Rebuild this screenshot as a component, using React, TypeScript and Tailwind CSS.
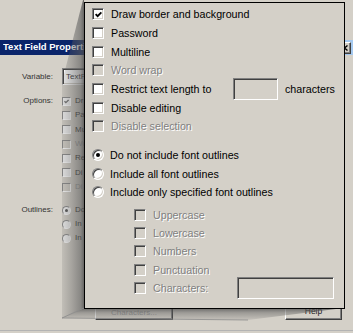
import React from "react";

const sunken =
  "border border-t-[#808080] border-l-[#808080] border-r-white border-b-white shadow-[inset_1px_1px_0_#404040,inset_-1px_-1px_0_#d4d0c8]";
const raised =
  "border border-t-white border-l-white border-r-[#404040] border-b-[#404040] shadow-[inset_-1px_-1px_0_#808080]";
const grayText = "text-[#808080] [text-shadow:1px_1px_0_#ffffff]";

function Tick({ size, color = "black" }: { size: number; color?: string }) {
  return (
    <svg width={size} height={size} viewBox="0 0 7 7">
      <polyline points="0.6,3.1 2.6,5.1 6.4,1.3" fill="none" stroke={color} strokeWidth="1.9" />
    </svg>
  );
}

function Box({ checked = false, disabled = false }: { checked?: boolean; disabled?: boolean }) {
  return (
    <span
      className={`flex items-center justify-center w-[12px] h-[12px] shrink-0 ${sunken} ${
        disabled ? "bg-[#d4d0c8]" : "bg-white"
      }`}
    >
      {checked && <Tick size={7} />}
    </span>
  );
}

function Radio({ checked = false }: { checked?: boolean }) {
  return (
    <span className="flex items-center justify-center w-[12px] h-[12px] shrink-0 rounded-full bg-white border border-t-[#808080] border-l-[#808080] border-r-white border-b-white shadow-[inset_1px_1px_0_#404040,inset_-1px_-1px_0_#d4d0c8]">
      {checked && <span className="w-[4px] h-[4px] rounded-full bg-black" />}
    </span>
  );
}

function SmallBox({ checked = false, disabled = false }: { checked?: boolean; disabled?: boolean }) {
  return (
    <span
      className={`flex items-center justify-center w-[9px] h-[9px] shrink-0 border border-t-[#8a8a8a] border-l-[#8a8a8a] border-r-white border-b-white ${
        disabled ? "bg-[#d4d0c8]" : "bg-[#f2f2f2]"
      }`}
    >
      {checked && <Tick size={5} color="#707070" />}
    </span>
  );
}

function SmallRadio({ checked = false }: { checked?: boolean }) {
  return (
    <span className="flex items-center justify-center w-[9px] h-[9px] shrink-0 rounded-full bg-[#f2f2f2] border border-t-[#8a8a8a] border-l-[#8a8a8a] border-r-white border-b-white">
      {checked && <span className="w-[3px] h-[3px] rounded-full bg-[#555]" />}
    </span>
  );
}

// only the slice left of the callout is visible in the dialog behind
const bgOptions = [
  { label: "Dr", checked: true },
  { label: "Pa" },
  { label: "Mu" },
  { label: "Wo", disabled: true },
  { label: "Re" },
  { label: "Di" },
  { label: "Di", disabled: true },
];

const bgOutlines = ["Do", "In", "In"];

const subOptions = ["Uppercase", "Lowercase", "Numbers", "Punctuation"];

export default function App() {
  return (
    <div className="relative w-[353px] h-[333px] overflow-hidden bg-[#d4d0c8] font-['Liberation_Sans',Arial,sans-serif]">
      {/* dialog behind the callout */}
      <div className="flex flex-col h-full pt-[40px] text-[8px] text-[#333]">
        <div className="h-[15px] flex items-center justify-between pl-[3px] pr-[2px] bg-linear-to-r from-[#0a246a] from-30% to-[#a6caf0]">
          <span className="text-white font-bold text-[9.5px] w-[82px] overflow-hidden whitespace-nowrap">
            Text Field Properties
          </span>
          <span className={`w-[14px] h-[12px] flex items-center justify-center bg-[#d4d0c8] ${raised}`}>
            <svg width="7" height="6" viewBox="0 0 7 6">
              <path d="M0.5 0.5 L6.5 5.5 M6.5 0.5 L0.5 5.5" stroke="black" strokeWidth="1.4" />
            </svg>
          </span>
        </div>

        <div className="w-[84px] overflow-hidden flex flex-col">
          <div className="mt-[13px] flex items-center h-[17px]">
            <span className="w-[53px] shrink-0 text-right">Variable:</span>
            <span className={`ml-[9px] w-[60px] shrink-0 h-[17px] flex items-center pl-[3px] bg-white ${sunken}`}>
              TextF
            </span>
          </div>

          <div className="mt-[9px] flex">
            <span className="w-[53px] shrink-0 h-[14.33px] flex items-center justify-end">Options:</span>
            <div className="ml-[9px] flex flex-col">
              {bgOptions.map((o, i) => (
                <div key={i} className="h-[14.33px] flex items-center gap-[4px]">
                  <SmallBox checked={o.checked} disabled={o.disabled} />
                  <span className={o.disabled ? "text-[#9a9a9a]" : ""}>{o.label}</span>
                </div>
              ))}
            </div>
          </div>

          <div className="mt-[9px] flex">
            <span className="w-[53px] shrink-0 h-[14px] flex items-center justify-end">Outlines:</span>
            <div className="ml-[9px] flex flex-col">
              {bgOutlines.map((o, i) => (
                <div key={i} className="h-[14px] flex items-center gap-[4px]">
                  <SmallRadio checked={i === 0} />
                  <span>{o}</span>
                </div>
              ))}
            </div>
          </div>
        </div>

        <div className="mt-auto flex h-[14px]">
          <span className={`ml-[95px] w-[78px] flex items-center justify-center text-[#999] ${raised}`}>
            Characters...
          </span>
          <span className={`ml-[112px] w-[57px] flex items-end pb-[1px] justify-center text-[8.5px] text-[#222] ${raised}`}>
            Help
          </span>
        </div>
        <div className="mt-[10px] h-px bg-[#b4b4b4]" />
        <div className="h-[2px]" />
      </div>

      {/* 3D zoom callout faces */}
      <svg className="absolute inset-0 pointer-events-none" width="353" height="333" viewBox="0 0 353 333">
        <defs>
          <linearGradient id="side" gradientUnits="userSpaceOnUse" x1="62" y1="0" x2="84" y2="0">
            <stop offset="0" stopColor="#5a5a5a" stopOpacity="0.15" />
            <stop offset="0.45" stopColor="#5a5a5a" stopOpacity="0.38" />
            <stop offset="0.85" stopColor="#5a5a5a" stopOpacity="0.62" />
            <stop offset="1" stopColor="#4a4a4a" stopOpacity="0.8" />
          </linearGradient>
          <linearGradient id="floor" gradientUnits="userSpaceOnUse" x1="0" y1="308" x2="0" y2="320">
            <stop offset="0" stopColor="#4a4a4a" stopOpacity="0.8" />
            <stop offset="0.4" stopColor="#5a5a5a" stopOpacity="0.45" />
            <stop offset="1" stopColor="#5a5a5a" stopOpacity="0.12" />
          </linearGradient>
        </defs>
        <polygon points="84,-4 62,82 62,318 84,308" fill="url(#side)" />
        <polygon points="62,318 84,308 344,308 248,320" fill="url(#floor)" />
        <path d="M62 318 L84 308 M62 318 L248 320" stroke="#8a8a8a" strokeWidth="0.8" fill="none" />
      </svg>

      {/* magnified callout */}
      <div className="absolute left-[84px] top-[2px] w-[261px] h-[307px] border border-black bg-[#d4d0c8] text-[10.7px] text-black flex flex-col pt-[2px] pl-[7px]">
        <div className="h-[18.67px] flex items-center gap-[7px]">
          <Box checked />
          <span>Draw border and background</span>
        </div>
        <div className="h-[18.67px] flex items-center gap-[7px]">
          <Box />
          <span>Password</span>
        </div>
        <div className="h-[18.67px] flex items-center gap-[7px]">
          <Box />
          <span>Multiline</span>
        </div>
        <div className="h-[18.67px] flex items-center gap-[7px]">
          <Box disabled />
          <span className={grayText}>Word wrap</span>
        </div>
        <div className="h-[18.67px] flex items-center gap-[7px]">
          <Box />
          <span className="w-[115px]">Restrict text length to</span>
          <span className={`w-[45px] h-[22px] shrink-0 bg-[#d4d0c8] ${sunken}`} />
          <span>characters</span>
        </div>
        <div className="h-[18.67px] flex items-center gap-[7px]">
          <Box />
          <span>Disable editing</span>
        </div>
        <div className="h-[18.67px] flex items-center gap-[7px]">
          <Box disabled />
          <span className={grayText}>Disable selection</span>
        </div>

        <div className="mt-[10px] flex flex-col">
          <div className="h-[18.67px] flex items-center gap-[6px]">
            <Radio checked />
            <span>Do not include font outlines</span>
          </div>
          <div className="h-[18.67px] flex items-center gap-[6px]">
            <Radio />
            <span>Include all font outlines</span>
          </div>
          <div className="h-[18.67px] flex items-center gap-[6px]">
            <Radio />
            <span>Include only specified font outlines</span>
          </div>
        </div>

        <div className="mt-[4px] pl-[42px] flex flex-col">
          {subOptions.map((s) => (
            <div key={s} className="h-[18.33px] flex items-center gap-[7px]">
              <Box disabled />
              <span className={grayText}>{s}</span>
            </div>
          ))}
          <div className="h-[18.33px] flex items-center gap-[7px]">
            <Box disabled />
            <span className={`w-[77px] ${grayText}`}>Characters:</span>
            <span className={`w-[97px] h-[22px] shrink-0 bg-[#d4d0c8] ${sunken}`} />
          </div>
        </div>
      </div>
    </div>
  );
}
